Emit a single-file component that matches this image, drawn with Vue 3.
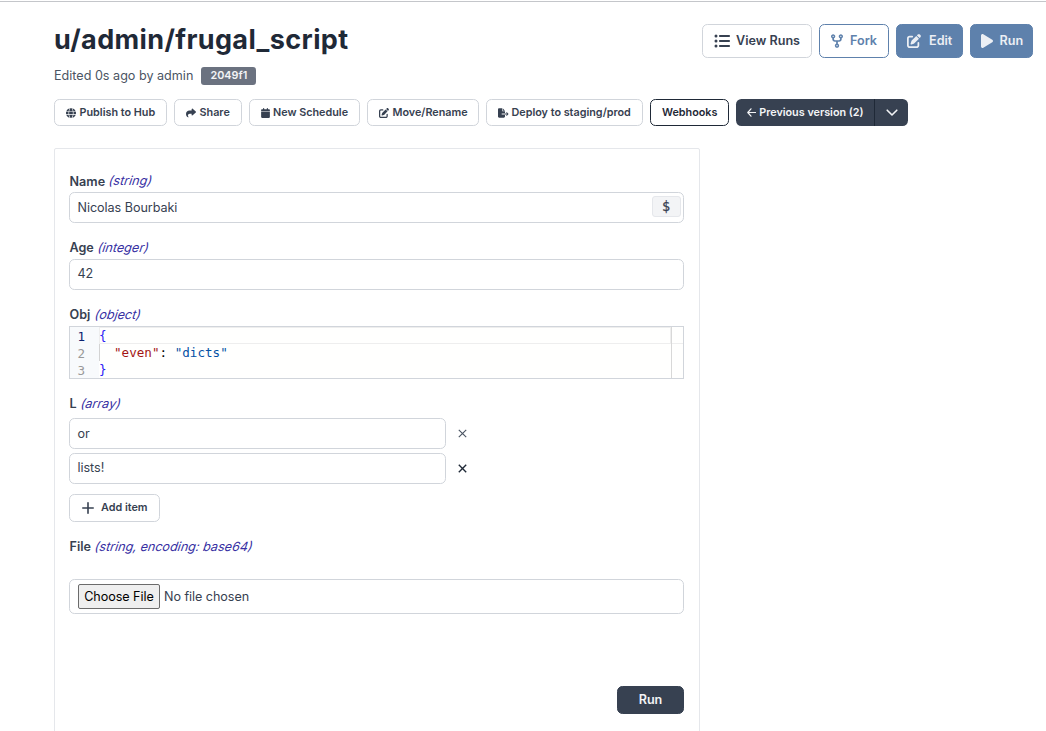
<script setup>
const icons = {
  list: { box: '0 0 512 512', d: 'M64 144a48 48 0 1 0 0-96 48 48 0 1 0 0 96zM192 64c-17.7 0-32 14.3-32 32s14.3 32 32 32H480c17.7 0 32-14.3 32-32s-14.3-32-32-32H192zm0 160c-17.7 0-32 14.3-32 32s14.3 32 32 32H480c17.7 0 32-14.3 32-32s-14.3-32-32-32H192zm0 160c-17.7 0-32 14.3-32 32s14.3 32 32 32H480c17.7 0 32-14.3 32-32s-14.3-32-32-32H192zM64 464a48 48 0 1 0 0-96 48 48 0 1 0 0 96zm48-208a48 48 0 1 0 -96 0 48 48 0 1 0 96 0z' },
  fork: { box: '0 0 448 512', d: 'M80 104a24 24 0 1 0 0-48 24 24 0 1 0 0 48zm80-24c0 32.8-19.7 61-48 73.3V192c0 17.7 14.3 32 32 32H304c17.7 0 32-14.3 32-32V153.3C307.7 141 288 112.8 288 80c0-44.2 35.8-80 80-80s80 35.8 80 80c0 32.8-19.7 61-48 73.3V192c0 53-43 96-96 96H256v70.7c28.3 12.3 48 40.5 48 73.3c0 44.2-35.8 80-80 80s-80-35.8-80-80c0-32.8 19.7-61 48-73.3V288H144c-53 0-96-43-96-96V153.3C19.7 141 0 112.8 0 80C0 35.8 35.8 0 80 0s80 35.8 80 80zm208 24a24 24 0 1 0 0-48 24 24 0 1 0 0 48zM248 432a24 24 0 1 0 -48 0 24 24 0 1 0 48 0z' },
  edit: { box: '0 0 512 512', d: 'M471.6 21.7c-21.9-21.9-57.3-21.9-79.2 0L362.3 51.7l97.9 97.9 30.1-30.1c21.9-21.9 21.9-57.3 0-79.2L471.6 21.7zm-299.2 220c-6.1 6.1-10.8 13.6-13.5 21.9l-29.6 88.8c-2.9 8.6-.6 18.1 5.8 24.6s15.9 8.7 24.6 5.8l88.8-29.6c8.2-2.7 15.7-7.4 21.9-13.5L437.7 172.3 339.7 74.3 172.4 241.7zM96 64C43 64 0 107 0 160V416c0 53 43 96 96 96H352c53 0 96-43 96-96V320c0-17.7-14.3-32-32-32s-32 14.3-32 32v96c0 17.7-14.3 32-32 32H96c-17.7 0-32-14.3-32-32V160c0-17.7 14.3-32 32-32h96c17.7 0 32-14.3 32-32s-14.3-32-32-32H96z' },
  play: { box: '0 0 384 512', d: 'M73 39c-14.8-9.1-33.4-9.4-48.5-.9S0 62.6 0 80V432c0 17.4 9.4 33.4 24.5 41.9s33.7 8.1 48.5-.9L361 297c14.3-8.7 23-24.2 23-41s-8.7-32.2-23-41L73 39z' },
  globe: { box: '0 0 512 512', d: 'M352 256c0 22.2-1.2 43.6-3.3 64H163.3c-2.2-20.4-3.3-41.8-3.3-64s1.2-43.6 3.3-64H348.7c2.2 20.4 3.3 41.8 3.3 64zm28.8-64H503.9c5.3 20.5 8.1 41.9 8.1 64s-2.8 43.5-8.1 64H380.8c2.1-20.6 3.2-42 3.2-64s-1.1-43.4-3.2-64zm112.6-32H376.7c-10-63.9-29.8-117.4-55.3-151.6c78.3 20.7 142 77.5 171.9 151.6zm-149.1 0H167.7c6.1-36.4 15.5-68.6 27-94.7c10.5-23.6 22.2-40.7 33.5-51.5C239.4 3.2 248.7 0 256 0s16.6 3.2 27.8 13.8c11.3 10.8 23 27.9 33.5 51.5c11.6 26 20.9 58.2 27 94.7zm-209 0H18.6C48.6 85.9 112.2 29.1 190.6 8.4C165.1 42.6 145.3 96.1 135.3 160zM8.1 192H131.2c-2.1 20.6-3.2 42-3.2 64s1.1 43.4 3.2 64H8.1C2.8 299.5 0 278.1 0 256s2.8-43.5 8.1-64zM194.7 446.6c-11.6-26-20.9-58.2-27-94.6H344.3c-6.1 36.4-15.5 68.6-27 94.6c-10.5 23.6-22.2 40.7-33.5 51.5C272.6 508.8 263.3 512 256 512s-16.6-3.2-27.8-13.8c-11.3-10.8-23-27.9-33.5-51.5zM135.3 352c10 63.9 29.8 117.4 55.3 151.6C112.2 482.9 48.6 426.1 18.6 352H135.3zm358.1 0c-30 74.1-93.6 130.9-171.9 151.6c25.5-34.2 45.2-87.7 55.3-151.6H493.4z' },
  share: { box: '0 0 512 512', d: 'M307 34.8c-11.5 5.1-19 16.6-19 29.2v64H176C78.8 128 0 206.8 0 304C0 417.3 81.5 467.9 100.2 478.1c2.5 1.4 5.3 1.9 8.1 1.9c10.9 0 19.7-8.9 19.7-19.7c0-7.5-4.3-14.4-9.8-19.5C108.8 431.9 96 414.4 96 384c0-53 43-96 96-96h96v64c0 12.6 7.4 24.1 19 29.2s25 3 34.4-5.4l160-144c6.7-6.1 10.6-14.7 10.6-23.8s-3.8-17.7-10.6-23.8l-160-144c-9.4-8.5-22.9-10.6-34.4-5.4z' },
  calendar: { box: '0 0 448 512', d: 'M96 32V64H48C21.5 64 0 85.5 0 112v48H448V112c0-26.5-21.5-48-48-48H352V32c0-17.7-14.3-32-32-32s-32 14.3-32 32V64H160V32c0-17.7-14.3-32-32-32S96 14.3 96 32zM448 192H0V464c0 26.5 21.5 48 48 48H400c26.5 0 48-21.5 48-48V192z' },
  export: { box: '0 0 576 512', d: 'M0 64C0 28.7 28.7 0 64 0H224V128c0 17.7 14.3 32 32 32H384V288H216c-13.3 0-24 10.7-24 24s10.7 24 24 24H384V448c0 35.3-28.7 64-64 64H64c-35.3 0-64-28.7-64-64V64zM384 336V288H494.1l-39-39c-9.4-9.4-9.4-24.6 0-33.9s24.6-9.4 33.9 0l80 80c9.4 9.4 9.4 24.6 0 33.9l-80 80c-9.4 9.4-24.6 9.4-33.9 0s-9.4-24.6 0-33.9l39-39H384zm0-208H256V0L384 128z' },
}
const main = [
  { text: 'View Runs', icon: 'list', cls: 'view' },
  { text: 'Fork', icon: 'fork', cls: 'fork' },
  { text: 'Edit', icon: 'edit', cls: 'solid edit' },
  { text: 'Run', icon: 'play', cls: 'solid play' },
]
const tools = [
  { text: 'Publish to Hub', icon: 'globe', cls: 'w-pub' },
  { text: 'Share', icon: 'share', cls: 'w-share' },
  { text: 'New Schedule', icon: 'calendar', cls: 'w-sched' },
  { text: 'Move/Rename', icon: 'edit', cls: 'w-move' },
  { text: 'Deploy to staging/prod', icon: 'export', cls: 'w-deploy' },
]
</script>

<template>
  <div class="page">
    <header class="head">
      <h1>u/admin/frugal_script</h1>
      <div class="main-actions">
        <button v-for="b in main" :key="b.text" class="btn" :class="b.cls">
          <svg :viewBox="icons[b.icon].box"><path :d="icons[b.icon].d" fill="currentColor" /></svg>
          <span>{{ b.text }}</span>
        </button>
      </div>
    </header>
    <div class="meta">
      <span>Edited 0s ago by admin</span>
      <span class="hash">2049f1</span>
    </div>
    <div class="tools">
      <button v-for="b in tools" :key="b.text" class="tool" :class="b.cls">
        <svg :viewBox="icons[b.icon].box"><path :d="icons[b.icon].d" fill="currentColor" /></svg>
        <span>{{ b.text }}</span>
      </button>
      <button class="tool hooks">Webhooks</button>
      <div class="split">
        <button class="prev">
          <svg viewBox="0 0 9 9"><path d="M4 .8 .8 4.5 4 8.2M1 4.5h7.6" /></svg>
          <span>Previous version (2)</span>
        </button>
        <button class="more"><svg viewBox="0 0 12 8"><path d="M1.2 1.2 6 6l4.8-4.8" /></svg></button>
      </div>
    </div>

    <main class="card">
      <label class="lbl first">Name <i>(string)</i></label>
      <div class="input name"><span>Nicolas Bourbaki</span><span class="dollar">$</span></div>
      <label class="lbl">Age <i>(integer)</i></label>
      <div class="input"><span>42</span></div>
      <label class="lbl">Obj <i>(object)</i></label>
      <div class="editor">
        <div class="gutter"><b>1</b><span>2</span><span>3</span></div>
        <div class="code">
          <div class="line current"><span class="brace">{</span></div>
          <div class="line guide"><span class="key">"even"</span>: <span class="str">"dicts"</span></div>
          <div class="line"><span class="brace">}</span></div>
        </div>
        <div class="ruler"></div>
      </div>
      <label class="lbl array">L <i>(array)</i></label>
      <div class="item">
        <div class="input low"><span>or</span></div>
        <svg class="x thin" viewBox="0 0 8 8"><path d="M.7.7l6.6 6.6M7.3.7.7 7.3" /></svg>
      </div>
      <div class="item">
        <div class="input"><span>lists!</span></div>
        <svg class="x" viewBox="0 0 8 8"><path d="M.7.7l6.6 6.6M7.3.7.7 7.3" /></svg>
      </div>
      <button class="add"><svg viewBox="0 0 12 12"><path d="M6 .8v10.4M.8 6h10.4" /></svg><span>Add item</span></button>
      <label class="lbl">File <i>(string, encoding: base64)</i></label>
      <div class="input file"><span class="choose">Choose File</span><span>No file chosen</span></div>
      <button class="run">Run</button>
    </main>
  </div>
</template>

<style>
body { background: #fff; overflow: hidden; }
</style>

<style scoped>
* { box-sizing: border-box; }
.page { height: 731px; overflow: hidden; padding: 22px 13px 0 54px; border-top: 1px solid #fff; font: 12.6px/18px Inter, sans-serif; font-optical-sizing: none; color: #2d3748; background: linear-gradient(#c4c6ca, #c4c6ca) 0 0 / 100% 1px no-repeat; }
button { font: inherit; font-optical-sizing: none; margin: 0; padding: 0; background: #fff; color: #374151; border: 1px solid #d1d5db; border-radius: 5.4px; display: flex; align-items: center; font-weight: 600; white-space: nowrap; flex: none; }
svg { display: block; flex: none; }
.head { display: flex; justify-content: space-between; align-items: flex-start; height: 43px; }
h1 { margin: 1px 0 0; font-size: 27px; line-height: 32px; font-weight: 700; letter-spacing: .37px; color: #1f2937; }
.main-actions { display: flex; gap: 7px; padding-top: 1px; }
.btn { height: 34px; padding-left: 11px; gap: 7px; padding-bottom: 1px; }
.btn svg { width: 14px; height: 14px; position: relative; top: .5px; }
.btn.view { width: 110px; gap: 6px; }
.btn.view svg { width: 16px; height: 16px; top: 0; }
.fork { width: 70px; color: #5e81ac; border-color: #5e81ac; }
.btn.fork svg { width: 12px; }
.solid { background: #5e81ac; border-color: #5e81ac; color: #eceff4; }
.edit { width: 67px; padding-left: 10px; gap: 8px; }
.btn.play { width: 63px; padding-left: 9.5px; gap: 7px; }
.btn.play svg { width: 12px; height: 16px; top: 0; }
.meta { display: flex; align-items: center; gap: 8px; height: 20px; color: #4b5563; }
.hash { width: 55px; height: 18px; line-height: 17px; border-radius: 3px; background: #6b7280; color: #f3f4f6; font-size: 10.8px; font-weight: 600; text-align: center; }
.tools { display: flex; gap: 7px; margin-top: 13px; }
.tool, .split { height: 27px; font-size: 10.8px; }
.tool { padding-left: 11px; gap: 3.5px; }
.tool svg { width: 10px; height: 10px; position: relative; top: .5px; }
.w-pub { width: 113px; }
.w-share { width: 68px; }
.w-sched { width: 111px; gap: 3px; }
.w-sched svg { width: 9px; }
.w-move { width: 112px; }
.w-deploy { width: 157px; gap: 3px; }
.tool.w-deploy svg { width: 10.5px; }
.hooks { width: 79px; border-color: #1f2937; color: #1f2937; }
.split { display: flex; width: 172px; border-radius: 5.4px; background: #374151; overflow: hidden; }
.split button { background: none; border: 0; border-radius: 0; color: #f3f4f6; }
.split path { fill: none; stroke: currentColor; stroke-width: 1.2; stroke-linecap: round; stroke-linejoin: round; }
.split .prev { width: 139px; padding-left: 11px; gap: 3.2px; border-right: 1px solid #1f2937; }
.prev svg { width: 9px; height: 9px; }
.more { width: 33px; justify-content: center; }
.more svg { width: 12px; height: 8px; }
.more path { stroke-width: 1.6; }
.card { width: 646px; height: 620px; margin-top: 22px; padding: 24px 15px 0 14px; border: 1px solid #e5e7eb; border-radius: 2px; display: flex; flex-direction: column; }
.lbl { display: block; height: 18px; margin-bottom: 2px; padding-left: .5px; font-weight: 600; color: #374151; white-space: nowrap; }
.lbl.first { margin-bottom: 1px; }
.lbl.array { margin-bottom: 5px; }
.lbl i { display: inline-block; font-style: normal; font-weight: 400; color: #3730a3; transform: skewX(-18deg); margin-left: 1px; }
.lbl.first i { transform: translateY(-1px) skewX(-18deg); }
.input { height: 31px; width: 615px; border: 1px solid #d1d5db; border-radius: 5.4px; display: flex; align-items: center; justify-content: space-between; padding: 0 2px 1px 7.5px; color: #374151; letter-spacing: -.05px; margin-bottom: 16px; }
.name, .low { padding-bottom: 0; }
.dollar { width: 29px; height: 21px; margin-bottom: 2px; border: 1px solid #e5e7eb; border-radius: 3px; background: #f3f4f6; text-align: center; font: 13.5px/18px "DejaVu Sans Mono", monospace; -webkit-text-stroke: .25px #374151; padding-right: 1px; }
.editor { width: 615px; height: 53px; margin-bottom: 16px; border: 1px solid #d1d5db; background: #fffffe; display: flex; font: 12.6px/17px "DejaVu Sans Mono", monospace; overflow: hidden; }
.gutter { width: 29px; background: #f8fafc; color: #999; display: flex; flex-direction: column; text-align: right; padding: 1px 14px 0 0; }
.gutter b { color: #0b216f; font-weight: 400; }
.code { width: 572px; color: #000; white-space: pre; }
.line { height: 17px; }
.current { box-shadow: inset 0 0 0 1px #eee; }
.guide { padding-left: 14px; border-left: 1px solid #d3d3d3; }
.brace { color: #2a20f5; }
.key { color: #a31515; }
.str { color: #0451a5; }
.ruler { flex: 1; border-left: 1px solid #d8d8d8; background: linear-gradient(#eee, #eee) 0 16px / 100% 1px no-repeat; }
.item { display: flex; align-items: center; gap: 12px; margin-bottom: 4px; }
.item .input { width: 377px; margin: 0; }
.x { width: 9px; height: 9px; color: #1f2937; }
.x path { fill: none; stroke: currentColor; stroke-width: 1.2; }
.x.thin { color: #4b5563; }
.x.thin path { stroke-width: 1; }
.add { width: 91px; height: 28px; margin: 6px 0 16px; padding-left: 11.5px; gap: 7.5px; font-size: 10.8px; }
.add svg { width: 12px; height: 12px; }
.add path { fill: none; stroke: currentColor; stroke-width: 1.6; stroke-linecap: round; }
.file { height: 35px; margin: 21px 0 0; justify-content: flex-start; gap: 4px; padding: 0 0 0 8px; }
.choose { width: 82px; height: 25px; line-height: 23px; border: 1px solid #6b6b6b; border-radius: 2px; background: #efefef; color: #000; text-align: center; }
.run { width: 67px; height: 28px; margin: 72px 0 0; align-self: flex-end; justify-content: center; background: #374151; border-color: #374151; color: #f3f4f6; }
</style>
